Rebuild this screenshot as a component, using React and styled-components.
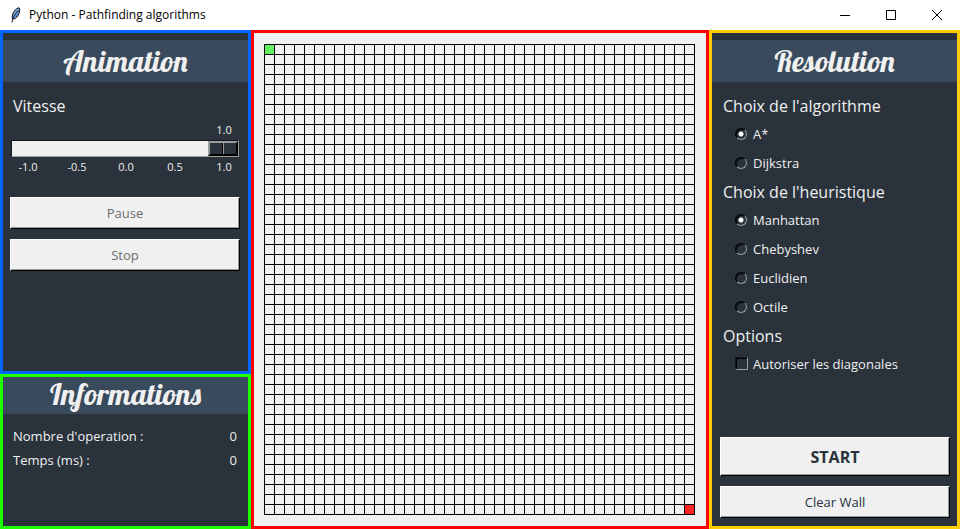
import React, { useState } from "react";
import styled, { createGlobalStyle, css } from "styled-components";

const COLUMNS = 43;
const ROWS = 47;

const color = {
  panel: "#2a323b",
  heading: "#384a5b",
  light: "#f0f0f0",
  shade: "#9a9c9e",
  ink: "#28303a",
};

const GlobalStyle = createGlobalStyle`
  *, *::before, *::after { box-sizing: border-box; }
  body {
    margin: 0;
    background: ${color.light};
    font-family: "Open Sans", "Noto Sans", sans-serif;
  }
`;

const Window = styled.div`
  display: flex;
  flex-direction: column;
  min-height: 100vh;
`;

const TitleBar = styled.header`
  display: flex;
  align-items: center;
  height: 30px;
  padding-left: 10px;
  background: #fff;
  color: #000;
`;

const WindowTitle = styled.h1`
  flex: 1;
  margin: 0 0 0 7px;
  font-size: 12px;
  line-height: 30px;
  font-weight: 400;
`;

const WindowButton = styled.button`
  display: flex;
  align-items: center;
  justify-content: center;
  width: 46px;
  height: 28px;
  padding: 0;
  border: 0;
  background: transparent;
  color: #000;
`;

const Workspace = styled.main`
  flex: 1;
  display: grid;
  grid-template-columns: 251px minmax(0, 1fr) 251px;
`;

const Sidebar = styled.div`
  display: flex;
  flex-direction: column;
`;

const Panel = styled.section`
  display: flex;
  flex-direction: column;
  flex: ${(p) => (p.$compact ? "none" : "1")};
  min-height: ${(p) => (p.$compact ? "155px" : "0")};
  padding-top: ${(p) => (p.$compact ? "0" : "7px")};
  border: 3px solid ${(p) => p.$outline};
  background: ${color.panel};
  color: ${color.light};
`;

const PanelTitle = styled.h2`
  margin: 0;
  height: ${(p) => (p.$compact ? "37px" : "42px")};
  background: ${color.heading};
  font-family: Lobster, "Liberation Serif", serif;
  font-size: 30px;
  line-height: ${(p) => (p.$compact ? "34px" : "42px")};
  font-weight: 400;
  text-align: center;
`;

const PanelBody = styled.div`
  flex: 1;
  display: flex;
  flex-direction: column;
  padding: 10px 8px 8px;
  padding-left: ${(p) => (p.$narrow ? "7px" : "8px")};
  padding-right: ${(p) => (p.$narrow ? "8px" : "7px")};
`;

const captionStyle = css`
  display: block;
  padding: 0 3px;
  font-size: 16px;
  line-height: 28px;
  font-weight: 400;
`;

const Caption = styled.label`
  ${captionStyle}
`;

const ScaleValue = styled.output`
  align-self: flex-end;
  width: 30px;
  margin-right: 1px;
  font-size: 11px;
  line-height: 20px;
  text-align: center;
`;

const Slider = styled.input`
  appearance: none;
  display: block;
  height: 17px;
  margin: 0 1px;
  border: 1px solid;
  border-color: #14181c ${color.shade} ${color.shade} #14181c;
  background: ${color.light};

  &::-webkit-slider-thumb {
    appearance: none;
    width: 30px;
    height: 15px;
    border: 2px solid;
    border-color: ${color.shade} #000 #000 ${color.shade};
    border-radius: 0;
    background: linear-gradient(
      90deg,
      ${color.panel} 12px,
      #000 12px 13px,
      ${color.shade} 13px 14px,
      ${color.panel} 14px
    );
  }
`;

const Ticks = styled.div`
  display: flex;
  justify-content: space-between;
  padding: 0 1px 0 3px;
  font-size: 11px;
  line-height: 20px;

  span {
    width: 30px;
    text-align: center;
  }
`;

const Actions = styled.div`
  display: flex;
  flex-direction: column;
  gap: 10px;
  margin-top: ${(p) => (p.$bottom ? "auto" : "20px")};
`;

const RaisedButton = styled.button`
  height: ${(p) => (p.$primary ? "39px" : "32px")};
  padding: 0;
  border: 1px solid;
  border-color: #fff #000 #000 #fff;
  box-shadow: inset -1px -1px 0 ${color.shade};
  background: ${color.light};
  color: ${color.ink};
  font-family: inherit;
  font-size: ${(p) => (p.$primary ? "16px" : "13px")};
  font-weight: ${(p) => (p.$primary ? 700 : 400)};

  &:disabled {
    color: #6d6d6d;
  }
`;

const Stats = styled.dl`
  margin: 0;
  padding: 0 3px;
  font-size: 13px;
  line-height: 24px;
`;

const Stat = styled.div`
  display: flex;
  justify-content: space-between;

  dd {
    margin: 0;
  }
`;

const BoardArea = styled.section`
  display: flex;
  justify-content: center;
  padding: 11px 2px 11px 0;
  border: 3px solid #ff0000;
  background: ${color.light};
`;

const Board = styled.div`
  display: grid;
  align-self: flex-start;
  grid-template-columns: repeat(${COLUMNS}, 9px);
  grid-auto-rows: 9px;
  gap: 1px;
  padding: 1px;
  background: #000;
`;

const cellColors = { start: "#60f060", goal: "#ff2424", empty: color.light };

const Cell = styled.div`
  background: ${(p) => cellColors[p.$kind]};
`;

const Group = styled.fieldset`
  margin: 0;
  padding: 0;
  border: 0;
`;

const GroupTitle = styled.legend`
  ${captionStyle}
`;

const Choice = styled.label`
  display: flex;
  align-items: center;
  gap: ${(p) => (p.$square ? "5px" : "6px")};
  height: 29px;
  padding: 0 0 2px 15px;
  font-size: 13px;
`;

const Radio = styled.input`
  appearance: none;
  width: 12px;
  height: 12px;
  margin: 0;
  border: 1px solid;
  border-color: #000 ${color.shade} ${color.shade} #000;
  border-radius: 50%;
  box-shadow: inset 1px 1px 0 #0b0e11;

  &:checked {
    background: radial-gradient(circle, #fff 2px, transparent 3px);
  }
`;

const Checkbox = styled.input`
  appearance: none;
  width: 13px;
  height: 13px;
  margin: 0;
  border: 1px solid;
  border-color: #14181c ${color.shade} ${color.shade} #14181c;
  box-shadow: inset 1px 1px 0 #000;

  &:checked {
    background: ${color.light};
  }
`;

function Feather() {
  return (
    <svg width="12" height="16" viewBox="0 0 12 16" aria-hidden="true">
      <path d="M2.5 12C1.2 8.5 4 2 9 .7c1.3 1 .7 5-1 7.8C6.5 11 4.5 12.5 2.5 12Z" fill="#5c91cf" stroke="#10151c" />
      <path d="M4 8.5C4.5 6 6.3 3.3 8 2.2" fill="none" stroke="#b9d8f5" />
      <path d="M2 15.5C2.3 12 4.5 7 7.8 3.5" fill="none" stroke="#17202b" />
    </svg>
  );
}

function WindowIcon({ path }) {
  return (
    <svg width="12" height="12" viewBox="0 0 12 12" aria-hidden="true">
      <path d={path} fill="none" stroke="currentColor" />
    </svg>
  );
}

function ChoiceGroup({ title, name, options }) {
  const [selected, setSelected] = useState(options[0]);
  return (
    <Group>
      <GroupTitle>{title}</GroupTitle>
      {options.map((option) => (
        <Choice key={option}>
          <Radio
            type="radio"
            name={name}
            checked={selected === option}
            onChange={() => setSelected(option)}
          />
          {option}
        </Choice>
      ))}
    </Group>
  );
}

function cellKind(index) {
  if (index === 0) return "start";
  if (index === COLUMNS * ROWS - 1) return "goal";
  return "empty";
}

export default function App() {
  const [speed, setSpeed] = useState(1);

  return (
    <Window>
      <GlobalStyle />
      <TitleBar>
        <Feather />
        <WindowTitle>Python - Pathfinding algorithms</WindowTitle>
        <WindowButton aria-label="Minimize">
          <WindowIcon path="M1 6.5H11" />
        </WindowButton>
        <WindowButton aria-label="Maximize">
          <WindowIcon path="M1.5 1.5h9v9h-9z" />
        </WindowButton>
        <WindowButton aria-label="Close">
          <WindowIcon path="M1 1L11 11M11 1L1 11" />
        </WindowButton>
      </TitleBar>

      <Workspace>
        <Sidebar>
          <Panel $outline="#0066ff">
            <PanelTitle>Animation</PanelTitle>
            <PanelBody $narrow>
              <Caption htmlFor="speed">Vitesse</Caption>
              <ScaleValue htmlFor="speed">{speed.toFixed(1)}</ScaleValue>
              <Slider
                id="speed"
                type="range"
                min="-1"
                max="1"
                step="0.1"
                value={speed}
                onChange={(e) => setSpeed(Number(e.target.value))}
              />
              <Ticks>
                {["-1.0", "-0.5", "0.0", "0.5", "1.0"].map((tick) => (
                  <span key={tick}>{tick}</span>
                ))}
              </Ticks>
              <Actions>
                <RaisedButton disabled>Pause</RaisedButton>
                <RaisedButton disabled>Stop</RaisedButton>
              </Actions>
            </PanelBody>
          </Panel>

          <Panel $outline="#1eff00" $compact>
            <PanelTitle $compact>Informations</PanelTitle>
            <PanelBody $narrow>
              <Stats>
                <Stat>
                  <dt>Nombre d'operation :</dt>
                  <dd>0</dd>
                </Stat>
                <Stat>
                  <dt>Temps (ms) :</dt>
                  <dd>0</dd>
                </Stat>
              </Stats>
            </PanelBody>
          </Panel>
        </Sidebar>

        <BoardArea>
          <Board>
            {Array.from({ length: COLUMNS * ROWS }, (_, i) => (
              <Cell key={i} $kind={cellKind(i)} />
            ))}
          </Board>
        </BoardArea>

        <Panel $outline="#ffcc00">
          <PanelTitle>Resolution</PanelTitle>
          <PanelBody>
            <ChoiceGroup
              title="Choix de l'algorithme"
              name="algorithm"
              options={["A*", "Dijkstra"]}
            />
            <ChoiceGroup
              title="Choix de l'heuristique"
              name="heuristic"
              options={["Manhattan", "Chebyshev", "Euclidien", "Octile"]}
            />
            <Group>
              <GroupTitle>Options</GroupTitle>
              <Choice $square>
                <Checkbox type="checkbox" />
                Autoriser les diagonales
              </Choice>
            </Group>
            <Actions $bottom>
              <RaisedButton $primary>START</RaisedButton>
              <RaisedButton>Clear Wall</RaisedButton>
            </Actions>
          </PanelBody>
        </Panel>
      </Workspace>
    </Window>
  );
}
